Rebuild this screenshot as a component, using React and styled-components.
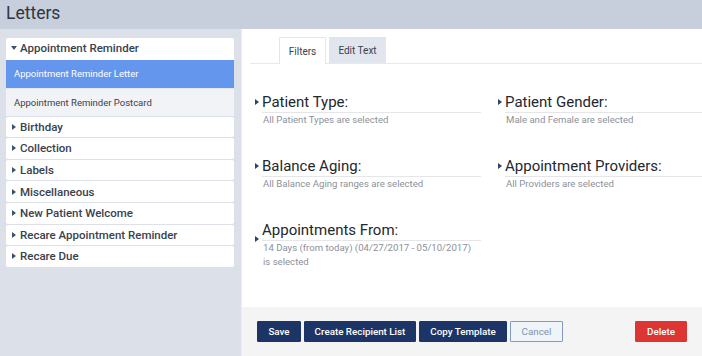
import styled, { createGlobalStyle } from "styled-components";

const GlobalStyle = createGlobalStyle`
  html, body {
    margin: 0;
    padding: 0;
    background: #ffffff;
  }
  body {
    font-family: Roboto, "Liberation Sans", sans-serif;
  }
`;

const groups = [
  "Birthday",
  "Collection",
  "Labels",
  "Miscellaneous",
  "New Patient Welcome",
  "Recare Appointment Reminder",
  "Recare Due",
];

const filters = [
  { title: "Patient Type:", lines: ["All Patient Types are selected"] },
  { title: "Patient Gender:", lines: ["Male and Female are selected"] },
  { title: "Balance Aging:", lines: ["All Balance Aging ranges are selected"] },
  { title: "Appointment Providers:", lines: ["All Providers are selected"] },
  {
    title: "Appointments From:",
    lines: ["14 Days (from today) (04/27/2017 - 05/10/2017)", "is selected"],
    low: true,
  },
];

const App = () => {
  return (
    <>
      <GlobalStyle />
      <Page>
        <Header>Letters</Header>
        <Body>
          <Sidebar>
            <Menu>
              <Group>
                <GroupHead>
                  <Caret $open />
                  Appointment Reminder
                </GroupHead>
                <SubItem $active>Appointment Reminder Letter</SubItem>
                <SubItem>Appointment Reminder Postcard</SubItem>
              </Group>
              {groups.map((g) => (
                <Group key={g}>
                  <GroupHead>
                    <Caret />
                    {g}
                  </GroupHead>
                </Group>
              ))}
            </Menu>
          </Sidebar>
          <Main>
            <Content>
              <Tabs>
                <Tab $active $width={47}>Filters</Tab>
                <Tab $width={57}>Edit Text</Tab>
              </Tabs>
              <FilterGrid>
                {filters.map((f) => (
                  <Filter key={f.title}>
                    <Marker $low={f.low} />
                    <FilterBody>
                      <FilterTitle>{f.title}</FilterTitle>
                      {f.lines.map((l) => (
                        <FilterNote key={l}>{l}</FilterNote>
                      ))}
                    </FilterBody>
                  </Filter>
                ))}
              </FilterGrid>
            </Content>
            <Footer>
              <Button $width={44}>Save</Button>
              <Button $width={112}>Create Recipient List</Button>
              <Button $width={88}>Copy Template</Button>
              <Button $width={53} $variant="ghost">Cancel</Button>
              <Spacer />
              <Button $width={52} $variant="danger">Delete</Button>
            </Footer>
          </Main>
        </Body>
      </Page>
    </>
  );
};

export default App;

const Page = styled.div`
  width: 702px;
  height: 356px;
  display: flex;
  flex-direction: column;
  overflow: hidden;
`;

const Header = styled.div`
  height: 29px;
  flex-shrink: 0;
  background: #c7cfdc;
  color: #2f3643;
  font-size: 17.5px;
  line-height: 27px;
  padding-left: 6px;
`;

const Body = styled.div`
  flex: 1;
  display: flex;
  min-height: 0;
`;

const Sidebar = styled.div`
  width: 242px;
  flex-shrink: 0;
  background: #dce0e9;
  padding: 9px 7px 0 6px;
  box-sizing: border-box;
  border-right: 1px solid #eceef3;
`;

const Menu = styled.div`
  display: flex;
  flex-direction: column;
  gap: 1px;
`;

const Group = styled.div`
  background: #ffffff;
  border-radius: 2px;
`;

const GroupHead = styled.div`
  height: 20.6px;
  display: flex;
  align-items: center;
  padding-left: 5px;
  font-size: 11.5px;
  font-weight: 500;
  color: #3a414e;
`;

const Caret = styled.span`
  width: 0;
  height: 0;
  ${({ $open }) =>
    $open
      ? `border-left: 3px solid transparent;
         border-right: 3px solid transparent;
         border-top: 4px solid #3b5372;
         margin-right: 3px;`
      : `border-top: 3px solid transparent;
         border-bottom: 3px solid transparent;
         border-left: 4px solid #3b5372;
         margin-left: 1px;
         margin-right: 4px;`}
`;

const SubItem = styled.div`
  height: 28px;
  display: flex;
  align-items: center;
  padding-left: 8px;
  font-size: 9.5px;
  color: ${({ $active }) => ($active ? "#ffffff" : "#3a414e")};
  background: ${({ $active }) => ($active ? "#6596ee" : "#f1f3f7")};
  border-top: ${({ $active }) => ($active ? "none" : "1px solid #e3e6ed")};
  box-sizing: border-box;
  ${({ $active }) => ($active ? "margin-top: 1px;" : "")}
`;

const Main = styled.div`
  flex: 1;
  display: flex;
  flex-direction: column;
  min-width: 0;
`;

const Content = styled.div`
  flex: 1;
  background: #ffffff;
  padding: 8px 0 0 8px;
`;

const Tabs = styled.div`
  display: flex;
  gap: 3px;
  padding-left: 29px;
  border-bottom: 1px solid #e6e9ef;
`;

const Tab = styled.div`
  box-sizing: border-box;
  display: flex;
  align-items: center;
  justify-content: center;
  white-space: nowrap;
  font-size: 10px;
  color: #3a414e;
  width: ${({ $width }) => $width}px;
  height: ${({ $active }) => ($active ? "27px" : "26px")};
  margin-bottom: ${({ $active }) => ($active ? "-1px" : "0")};
  background: ${({ $active }) => ($active ? "#ffffff" : "#e1e5ed")};
  border: 1px solid ${({ $active }) => ($active ? "#e3e6ec" : "#e1e5ed")};
  border-bottom: none;
`;

const FilterGrid = styled.div`
  display: grid;
  grid-template-columns: 226px 1fr;
  column-gap: 17px;
  row-gap: 28px;
  padding: 28px 0 0 5px;
`;

const Filter = styled.div`
  display: flex;
  align-items: flex-start;
  min-height: 36px;
`;

const Marker = styled.span`
  flex-shrink: 0;
  width: 0;
  height: 0;
  margin-top: ${({ $low }) => ($low ? "16px" : "7px")};
  margin-right: 3px;
  border-top: 3.5px solid transparent;
  border-bottom: 3.5px solid transparent;
  border-left: 4px solid #2a4463;
`;

const FilterBody = styled.div`
  flex: 1;
  min-width: 0;
`;

const FilterTitle = styled.div`
  font-size: 15px;
  line-height: 20px;
  color: #23272f;
  border-bottom: 1px solid #e4e6ea;
`;

const FilterNote = styled.div`
  font-size: 9.6px;
  line-height: 14px;
  color: #8d9198;
  padding-left: 1px;
  &:first-of-type {
    margin-top: 2px;
  }
`;

const Footer = styled.div`
  height: 49px;
  flex-shrink: 0;
  background: #f4f4f5;
  display: flex;
  align-items: center;
  gap: 3px;
  padding: 0 15px;
  box-sizing: border-box;
`;

const Spacer = styled.div`
  flex: 1;
`;

const Button = styled.button`
  width: ${({ $width }) => $width}px;
  height: 21px;
  padding: 0;
  white-space: nowrap;
  font-family: Roboto, "Liberation Sans", sans-serif;
  font-size: 9.8px;
  border-radius: 1px;
  cursor: pointer;
  color: ${({ $variant }) => ($variant === "ghost" ? "#8593a6" : "#ffffff")};
  font-weight: ${({ $variant }) => ($variant === "ghost" ? 400 : 500)};
  background: ${({ $variant }) =>
    $variant === "ghost" ? "#eff3fa" : $variant === "danger" ? "#dd3434" : "#1c3466"};
  border: 1px solid
    ${({ $variant }) =>
      $variant === "ghost" ? "#7f9dc4" : $variant === "danger" ? "#dd3434" : "#1c3466"};
`;
